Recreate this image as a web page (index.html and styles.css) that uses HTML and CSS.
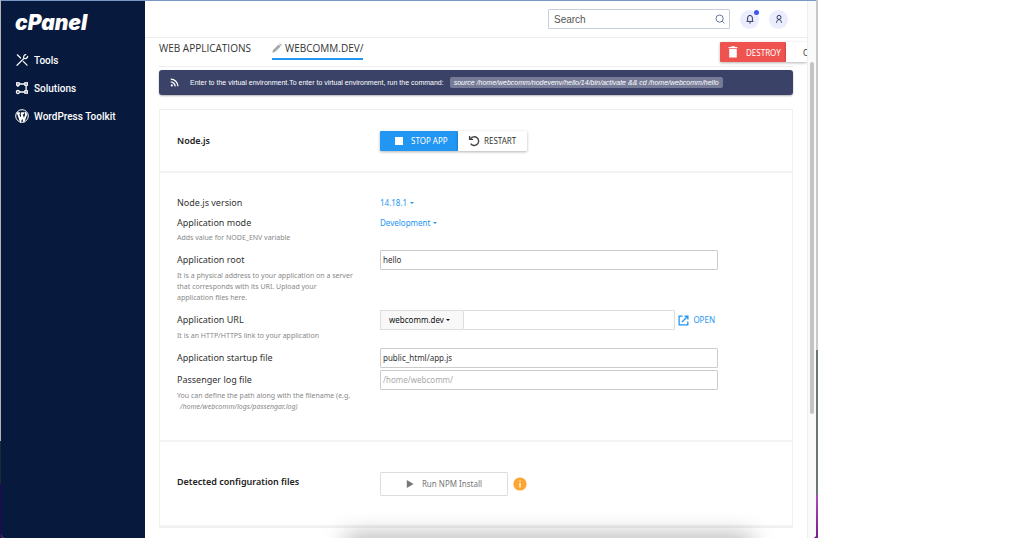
FILE: index.html
```html
<!DOCTYPE html>
<html lang="en">
<head>
    <meta charset="UTF-8">
    <meta name="viewport" content="width=device-width, initial-scale=1.0">
    <title>cPanel - Node.js</title>
    <link rel="stylesheet" href="styles.css">
</head>
<body>
    <div class="desktop">
        <div class="window">
            <nav class="sidebar">
                <a href="#" class="logo">cPanel</a>
                <a href="#" class="nav-link">
                    <svg viewBox="0 0 14 14" width="14" height="14" fill="none" stroke="#fff" stroke-width="1.2" stroke-linecap="round">
                        <path d="M2 12.3 L9 5.4 M2.3 1.8 L5.6 5 M8.3 8.4 L12 12.2"/>
                        <path d="M12.6 3.4 A2.4 2.4 0 0 1 9 5.3 A2.4 2.4 0 0 1 10.8 1.6"/>
                    </svg>
                    Tools
                </a>
                <a href="#" class="nav-link">
                    <svg viewBox="0 0 14 14" width="14" height="14" fill="none" stroke="#fff" stroke-width="1.3">
                        <rect x="1.7" y="1.8" width="2.4" height="2.4"/>
                        <rect x="9.9" y="1.8" width="2.4" height="2.4"/>
                        <rect x="9.9" y="9.8" width="2.4" height="2.4"/>
                        <circle cx="2.9" cy="11" r="1.5"/>
                        <path d="M4.1 3 H9.9 M11.1 4.2 V9.8 M4.4 11 H9.9 M2.9 4.2 V6"/>
                    </svg>
                    Solutions
                </a>
                <a href="#" class="nav-link">
                    <svg viewBox="0 0 14 14" width="14" height="14">
                        <circle cx="7" cy="7" r="6.3" fill="#071a3d" stroke="#fff" stroke-width="1"/>
                        <path d="M1.7 4.3 H4.9 M5.9 4.3 H9 M3 4.4 L5.5 11.6 L7.1 6.6 M6.3 4.4 L8.9 11.6 L11.2 5.5 C11 4.4 10.2 4.2 10.4 3" fill="none" stroke="#fff" stroke-width="1.9"/>
                    </svg>
                    WordPress Toolkit
                </a>
            </nav>

            <main class="main">
                <header class="topbar">
                    <div class="search">
                        <input type="text" placeholder="Search" aria-label="Search">
                        <svg viewBox="0 0 10 10" width="10" height="10" fill="none" stroke="#64789f" stroke-width="1">
                            <circle cx="4.6" cy="4.6" r="3.6"/>
                            <path d="M7.2 7.2 L9.3 9.4"/>
                        </svg>
                    </div>
                    <button class="round-button" aria-label="Notifications">
                        <svg viewBox="0 0 10 10" width="10" height="10" fill="none" stroke="#2c3a66" stroke-width="1">
                            <path d="M1.8 7.4 H8.2 L7.4 6.2 V4 A2.4 2.6 0 0 0 2.6 4 V6.2 Z M4.2 8.9 H5.8"/>
                        </svg>
                        <span class="badge"></span>
                    </button>
                    <button class="round-button" aria-label="Account">
                        <svg viewBox="0 0 10 10" width="10" height="10" fill="none" stroke="#2c3a66" stroke-width="1">
                            <circle cx="5" cy="3.4" r="2"/>
                            <path d="M2.6 8.8 C2.6 6.6 3.6 5.8 5 5.6 C6.4 5.8 7.4 6.6 7.4 8.8"/>
                        </svg>
                    </button>
                </header>

                <div class="content">
                    <div class="tabs">
                        <a href="#" class="tab">WEB APPLICATIONS</a>
                        <a href="#" class="tab active">
                            <svg viewBox="0 0 10 10" width="10" height="10" fill="#a3a8ac">
                                <path d="M0.3 9.8 L1 7 L6.6 1.4 L8.6 3.4 L3 9 Z M7.2 0.9 L7.9 0.3 L9.8 2.1 L9.1 2.9 Z"/>
                            </svg>
                            WEBCOMM.DEV/
                        </a>
                        <div class="button-group tab-actions">
                            <button class="button red">
                                <svg viewBox="0 0 10 12" width="10" height="12" fill="#fff">
                                    <path d="M0.6 1 H3 L3.6 0.3 H6.4 L7 1 H9.4 V2.2 H0.6 Z M1.2 3 H8.8 V11.5 H1.2 Z"/>
                                </svg>
                                DESTROY
                            </button>
                            <button class="button cut">C</button>
                        </div>
                    </div>

                    <div class="banner">
                        <svg viewBox="0 0 10 10" width="9" height="9" fill="none" stroke="#fff" stroke-width="1.5">
                            <circle cx="2" cy="8.2" r="1.2" fill="#fff" stroke="none"/>
                            <path d="M0.8 4.3 A4.9 4.9 0 0 1 5.7 9.3 M0.8 1.3 A8 8 0 0 1 8.8 9.3"/>
                        </svg>
                        <p>Enter to the virtual environment.To enter to virtual environment, run the command: <code>source /home/webcomm/nodevenv/hello/14/bin/activate &amp;&amp; cd /home/webcomm/hello</code></p>
                    </div>

                    <div class="card">
                        <section class="section head">
                            <h2>Node.js</h2>
                            <div class="button-group">
                                <button class="button blue">
                                    <svg viewBox="0 0 8 8" width="8" height="8"><rect width="8" height="8" fill="#fff"/></svg>
                                    STOP APP
                                </button>
                                <button class="button restart">
                                    <svg viewBox="0 0 12 12" width="12" height="12" fill="none" stroke="#444" stroke-width="1.4">
                                        <path d="M2.4 4 A4.4 4.4 0 1 1 2.6 8.6"/>
                                        <path d="M1.6 1 V4.4 H5"/>
                                    </svg>
                                    RESTART
                                </button>
                            </div>
                        </section>

                        <section class="section form">
                            <div class="row short">
                                <div class="info"><label for="version">Node.js version</label></div>
                                <div class="select link"><select id="version"><option>14.18.1</option></select></div>
                            </div>
                            <div class="row short">
                                <div class="info">
                                    <label for="mode">Application mode</label>
                                    <p class="hint">Adds value for NODE_ENV variable</p>
                                </div>
                                <div class="select link"><select id="mode"><option>Development</option></select></div>
                            </div>
                            <div class="row">
                                <div class="info">
                                    <label for="root">Application root</label>
                                    <p class="hint">It is a physical address to your application on a server that corresponds with its URI. Upload your application files here.</p>
                                </div>
                                <input type="text" class="field" id="root" value="hello">
                            </div>
                            <div class="row">
                                <div class="info">
                                    <label for="url">Application URL</label>
                                    <p class="hint">It is an HTTP/HTTPS link to your application</p>
                                </div>
                                <div class="url">
                                    <div class="select domain"><select aria-label="Domain"><option>webcomm.dev</option></select></div>
                                    <input type="text" class="field" id="url">
                                    <a href="#" class="open">
                                        <svg viewBox="0 0 11 11" width="11" height="11" fill="none" stroke="#2196f3" stroke-width="1.3">
                                            <path d="M4.6 1.2 H1.1 V9.9 H9.8 V6.4 M6.4 1.1 H9.9 V4.6 M9.7 1.3 L4 7"/>
                                        </svg>
                                        OPEN
                                    </a>
                                </div>
                            </div>
                            <div class="row">
                                <div class="info"><label for="startup">Application startup file</label></div>
                                <input type="text" class="field" id="startup" value="public_html/app.js">
                            </div>
                            <div class="row">
                                <div class="info">
                                    <label for="log">Passenger log file</label>
                                    <p class="hint">You can define the path along with the filename (e.g. <em>/home/webcomm/logs/passengar.log)</em></p>
                                </div>
                                <input type="text" class="field" id="log" placeholder="/home/webcomm/">
                            </div>
                        </section>

                        <section class="section config">
                            <h2>Detected configuration files</h2>
                            <div class="npm">
                                <button class="run">
                                    <svg viewBox="0 0 8 8" width="8" height="8"><path d="M0.8 0 L7.6 4 L0.8 8 Z" fill="#777"/></svg>
                                    Run NPM Install
                                </button>
                                <svg viewBox="0 0 14 14" width="14" height="14">
                                    <circle cx="7" cy="7" r="6.6" fill="#ffa533"/>
                                    <path d="M7 3.4 V4.8 M7 6 V10.4" stroke="#fff" stroke-width="1.3"/>
                                </svg>
                            </div>
                        </section>
                    </div>
                </div>
            </main>

            <div class="scrollbar"><div class="thumb"></div></div>
        </div>
    </div>
</body>
</html>
```
FILE: styles.css
```css
* {
    box-sizing: border-box;
}

body {
    margin: 0;
    padding-right: 206px;
    background: #fff;
    font-family: "Noto Sans", sans-serif;
    font-size: 9px;
    color: #333;
}

h2, p {
    margin: 0;
}

a {
    text-decoration: none;
    color: inherit;
}

svg {
    flex: none;
}

button, input, select {
    font: inherit;
    color: inherit;
}

button {
    cursor: pointer;
}

/* wallpaper showing at both sides of the window */
.desktop {
    height: 100vh;
    padding: 1px 2px 0 1px;
    background:
        linear-gradient(#b4b4b4 82%, #1d2b33 82%, #1d2b33 90%, #24084f 90%) left / 50% 100% no-repeat,
        linear-gradient(#c8c8c8 65%, #6c7478 65%, #6c7478 92%, #a850b8 92%, #7a1a90) right / 50% 100% no-repeat;
}

.window {
    display: flex;
    height: 100%;
    background: #fff;
    border-radius: 0 0 4px 4px;
    box-shadow: 0 -1px 0 #7899c8;
    overflow: hidden;
}

.sidebar {
    flex: none;
    width: 144px;
    padding: 9px 14px;
    background: #071a3d;
    color: #fff;
    font-family: Roboto, sans-serif;
    font-size: 10px;
    font-weight: 500;
}

.logo {
    display: block;
    margin-bottom: 12px;
    font-family: Inter, sans-serif;
    font-size: 21px;
    font-weight: 900;
    font-style: italic;
    line-height: 26px;
    height: 24px;
}

.nav-link {
    display: flex;
    align-items: center;
    gap: 5px;
    height: 28px;
}

.main {
    position: relative;
    flex: 1;
    min-width: 0;
    overflow: hidden;
}

/* shade rising from under the bottom edge */
.main::after {
    content: "";
    position: absolute;
    left: 31%;
    right: 9%;
    bottom: -14px;
    height: 10px;
    box-shadow: 0 0 24px 4px rgba(0, 0, 0, 0.4);
}

.topbar {
    display: flex;
    justify-content: flex-end;
    align-items: center;
    gap: 10px;
    height: 37px;
    padding: 0 19px 0 14px;
    border-bottom: 1px solid #eee;
}

.search {
    display: flex;
    align-items: center;
    width: 182px;
    height: 20px;
    padding: 0 4px 0 5px;
    border: 1px solid #c6cedd;
    border-radius: 1px;
}

.search input {
    flex: 1;
    min-width: 0;
    padding: 0;
    border: none;
    outline: none;
    background: none;
    font-family: "Liberation Sans", sans-serif;
    font-size: 10px;
}

.search input::placeholder {
    color: #555;
}

.round-button {
    position: relative;
    display: flex;
    justify-content: center;
    align-items: center;
    width: 19px;
    height: 19px;
    padding: 0;
    border: none;
    border-radius: 50%;
    background: #ebecfc;
}

.badge {
    position: absolute;
    top: 0;
    right: 0;
    width: 5px;
    height: 5px;
    border-radius: 50%;
    background: #3d57f0;
}

.content {
    padding: 0 14px;
}

.tabs {
    display: flex;
    align-items: flex-start;
    gap: 21px;
    height: 29px;
    border-bottom: 1px solid #eee;
}

.tab {
    display: flex;
    align-items: center;
    gap: 3px;
    height: 20px;
    font-family: "Open Sans", sans-serif;
    font-size: 10px;
    white-space: nowrap;
}

.tab.active {
    height: 22px;
    border-bottom: 2px solid #2196f3;
}

.button-group {
    display: flex;
}

.tab-actions {
    margin: 4px -14px 0 auto;
}

.button {
    display: flex;
    align-items: center;
    gap: 8px;
    height: 20px;
    padding: 0 12px;
    border: none;
    border-radius: 1px;
    background: #fff;
    box-shadow: 0 1px 3px rgba(0, 0, 0, 0.3);
    font-size: 8px;
    white-space: nowrap;
}

.red {
    width: 66px;
    padding: 0 8px;
    background: #ef5350;
    color: #fff;
}

.cut {
    width: 21px;
    padding: 0 0 0 17px;
    overflow: hidden;
}

.blue {
    width: 78px;
    padding: 0 15px;
    background: #2196f3;
    color: #fff;
}

.restart {
    gap: 4px;
    width: 69px;
    padding: 0 10px;
}

.banner {
    display: flex;
    align-items: center;
    gap: 11px;
    height: 25px;
    margin-top: 3px;
    padding: 0 11px;
    border-radius: 3px;
    background: #3a4268;
    box-shadow: 0 1px 2px rgba(0, 0, 0, 0.3);
    color: #fff;
    font-family: "Liberation Sans", sans-serif;
    font-size: 7px;
    white-space: nowrap;
}

.banner code {
    margin-left: 4px;
    padding: 2px 4px;
    border-radius: 2px;
    background: #767b98;
    font-family: inherit;
    font-size: 7px;
    font-style: italic;
}

.card {
    margin-top: 14px;
    border: 1px solid #f0f0f0;
}

.section {
    padding: 0 74px 0 17px;
    border-bottom: 2px solid #f3f3f3;
}

.section h2 {
    font-size: 9px;
    font-weight: 600;
    color: #222;
}

.head, .config, .row {
    display: grid;
    grid-template-columns: 203px 1fr;
}

.head {
    align-items: center;
    height: 63px;
}

.form {
    display: flex;
    flex-direction: column;
    gap: 2px;
    padding-top: 21px;
    padding-bottom: 23px;
}

.row {
    align-items: start;
    line-height: 20px;
}

.row.short {
    line-height: 18px;
}

.info {
    padding-right: 26px;
}

.info label {
    display: block;
}

.hint {
    margin-bottom: 5px;
    font-size: 7px;
    line-height: 11px;
    color: #888;
}

.hint em {
    padding-left: 3px;
    white-space: nowrap;
}

.field {
    width: 100%;
    min-width: 0;
    height: 20px;
    padding: 0 2px;
    border: 1px solid #ccc;
    border-radius: 1px;
    background: #fff;
    font-size: 8px;
}

.field::placeholder {
    color: #aaa;
}

.select {
    display: flex;
    align-items: center;
    gap: 2px;
}

.select select {
    appearance: none;
    padding: 0;
    border: none;
    background: none;
}

/* caret */
.select::after {
    content: "";
    border: 2px solid transparent;
    border-top-color: currentColor;
    border-bottom: none;
}

.link {
    height: 18px;
    color: #2196f3;
    font-size: 8px;
}

.url {
    display: flex;
    align-items: center;
}

.domain {
    flex: none;
    width: 83px;
    height: 20px;
    padding-left: 8px;
    border: 1px solid #ddd;
    border-right: none;
    background: #f8f8f8;
    font-size: 8px;
    color: #111;
}

.url .field {
    border-color: #ddd;
}

.open {
    display: flex;
    align-items: center;
    gap: 4px;
    padding: 0 3px;
    font-size: 8px;
    color: #2196f3;
}

.config {
    height: 85px;
    align-items: center;
}

.config h2 {
    padding-bottom: 5px;
}

.npm {
    display: flex;
    align-items: center;
    gap: 5px;
}

.run {
    display: flex;
    justify-content: center;
    align-items: center;
    gap: 8px;
    width: 128px;
    height: 24px;
    border: 1px solid #ddd;
    border-radius: 1px;
    background: #fff;
    font-size: 8px;
    color: #777;
}

.scrollbar {
    flex: none;
    width: 9px;
    padding: 61px 2px 0;
    border-left: 1px solid #eee;
    background: #fafafa;
}

.thumb {
    height: 74%;
    border-radius: 3px;
    background: #c4c4c4;
}
```
